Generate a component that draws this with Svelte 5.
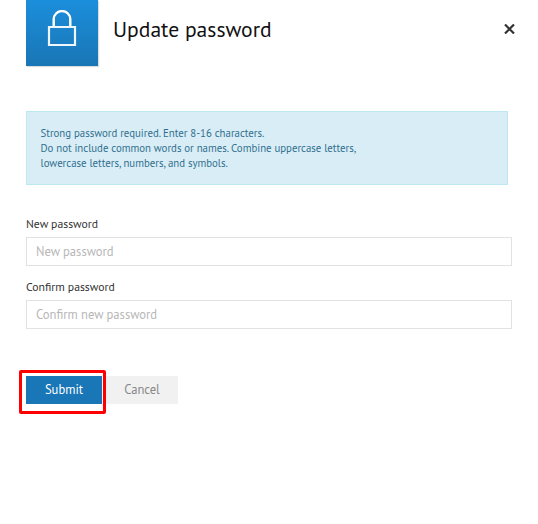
<script>
  let password = $state('');
  let confirmation = $state('');
</script>

<main class="dialog">
  <header>
    <div class="badge">
      <svg width="30" height="38" viewBox="0 0 30 38" fill="none" stroke="#fff" stroke-width="2.2" aria-hidden="true">
        <path stroke-opacity=".93" d="M2 17h26v18H2z" />
        <path stroke-width="2.4" d="M6.7 16V9.3a8.3 8.2 0 0 1 16.6 0V16" />
      </svg>
    </div>
    <h1>Update password</h1>
    <button class="close" aria-label="Close">
      <svg width="11" height="10" viewBox="0 0 11 10" fill="none" stroke="#333" stroke-width="2.2" aria-hidden="true">
        <path d="M1 .5l9 9M10 .5l-9 9" />
      </svg>
    </button>
  </header>

  <div class="notice">
    <span>Strong password required. Enter 8-16 characters.</span>
    <span>Do not include common words or names. Combine uppercase letters,</span>
    <span>lowercase letters, numbers, and symbols.</span>
  </div>

  <form onsubmit={(e) => e.preventDefault()}>
    <label for="new">New password</label>
    <input id="new" type="text" placeholder="New password" bind:value={password} />
    <label for="confirm">Confirm password</label>
    <input id="confirm" type="text" placeholder="Confirm new password" bind:value={confirmation} />
    <div class="actions">
      <div class="highlight"><button class="submit">Submit</button></div>
      <button class="cancel" type="button">Cancel</button>
    </div>
  </form>
</main>

<style>
  :global(body) { margin: 0; background: #fff; }
  .dialog {
    box-sizing: border-box;
    width: 538px;
    height: 524px;
    padding: 0 26px;
    overflow: hidden;
    font-family: "PT Sans", "Noto Sans", sans-serif;
    color: #333;
  }
  button, input { font: inherit; border: 0; border-radius: 0; padding: 0; margin: 0; outline: 0; }
  header { display: flex; height: 66px; }
  .badge {
    box-sizing: border-box;
    width: 72px;
    height: 66px;
    padding: 10px 0 0 21px;
    background: linear-gradient(#1b8edb, #1976b5);
    box-shadow: 1px 1px 1px #ddd;
  }
  .badge svg { display: block; }
  h1 {
    margin: 15px 0 0 15px;
    font-size: 21.6px;
    line-height: 29px;
    font-weight: 400;
    color: #111;
    white-space: nowrap;
  }
  .close { width: 11px; height: 10px; margin: 24px -3px 0 auto; background: none; }
  .close svg { display: block; }
  .notice {
    box-sizing: border-box;
    display: flex;
    flex-direction: column;
    width: 482px;
    height: 74px;
    margin-top: 45px;
    padding: 14px 13.5px 0;
    border: 1px solid #bce8f1;
    background: #d9edf6;
    color: #31708f;
    font-size: 10.8px;
    line-height: 15px;
    white-space: nowrap;
  }
  form { display: flex; flex-direction: column; align-items: flex-start; margin-top: 32px; }
  label { height: 14px; margin-bottom: 6px; font-size: 11.7px; line-height: 14px; white-space: nowrap; }
  input {
    box-sizing: border-box;
    width: 486px;
    height: 29px;
    margin-bottom: 14px;
    padding: 0 9px 2px;
    border: 1px solid #e2e2e2;
    font-size: 12.6px;
    background: #fff;
  }
  input::placeholder { color: #b7b7b7; opacity: 1; }
  .actions { display: flex; margin: 27px 0 0 -7px; }
  .highlight { box-sizing: border-box; width: 87px; height: 44px; padding: 3px 0 0 4px; border: 3px solid #fe0000; border-radius: 2px; }
  .submit, .cancel { display: block; height: 28px; padding-bottom: 1px; font-size: 12.6px; line-height: 27px; }
  .submit { width: 76px; background: #1976b7; color: #fff; }
  .cancel { width: 72px; margin-top: 6px; background: #f1f1f1; color: #888; }
</style>
